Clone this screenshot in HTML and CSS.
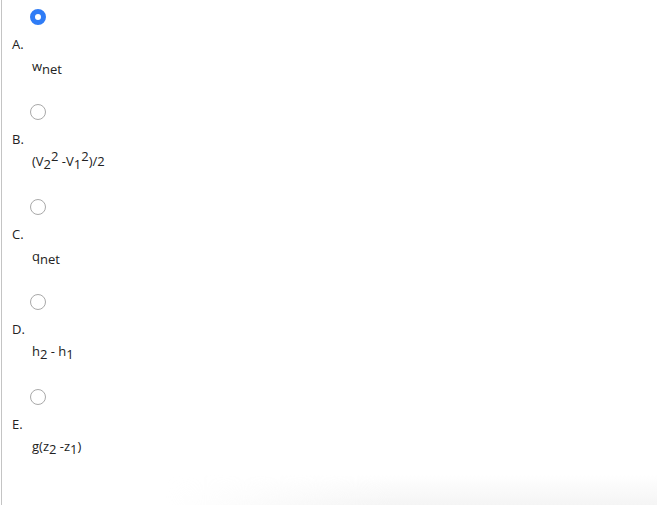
FILE: index.html
```html
<!DOCTYPE html>
<html>
<head>
<meta charset="utf-8">
<link rel="stylesheet" href="styles.css">
</head>
<body>
<div class="page">
  <div class="option">
    <div class="radio-row"><span class="radio checked"></span></div>
    <div class="letter">A.</div>
    <div class="answer">w<sub>net</sub></div>
  </div>
  <div class="option">
    <div class="radio-row"><span class="radio"></span></div>
    <div class="letter">B.</div>
    <div class="answer">(V<sub>2</sub><sup>2</sup> -V<sub>1</sub><sup>2</sup>)/2</div>
  </div>
  <div class="option">
    <div class="radio-row"><span class="radio"></span></div>
    <div class="letter">C.</div>
    <div class="answer">q<sub>net</sub></div>
  </div>
  <div class="option">
    <div class="radio-row"><span class="radio"></span></div>
    <div class="letter">D.</div>
    <div class="answer">h<sub>2</sub> - h<sub>1</sub></div>
  </div>
  <div class="option">
    <div class="radio-row"><span class="radio"></span></div>
    <div class="letter">E.</div>
    <div class="answer">g(z<sub>2</sub> -z<sub>1</sub>)</div>
  </div>
  <div class="fade"></div>
</div>
</body>
</html>
```
FILE: styles.css
```css
html, body {
  margin: 0;
  padding: 0;
  background: #fff;
}
body {
  font-family: "Open Sans", "Liberation Sans", sans-serif;
  font-size: 13px;
  color: #222;
}
.page {
  position: relative;
  margin-left: 1px;
  border-left: 1px solid #c4c4c4;
  height: 505px;
  box-sizing: border-box;
  padding-top: 9px;
  overflow: hidden;
}
.option {
  height: 95px;
}
.radio-row {
  padding-left: 28px;
  height: 16px;
}
.radio {
  display: block;
  width: 16px;
  height: 16px;
  box-sizing: border-box;
  border-radius: 50%;
  border: 1px solid #a9a9a9;
  background: #fff;
}
.radio.checked {
  border: 5px solid #2f7cf6;
  background: #fff;
}
.letter {
  padding-left: 10px;
  margin-top: 10px;
  line-height: 18px;
}
.answer {
  padding-left: 30px;
  margin-top: 4px;
  line-height: 18px;
}
sub, sup {
  font-size: inherit;
  line-height: 0;
  position: relative;
}
sub {
  vertical-align: baseline;
  top: 3px;
}
sup {
  vertical-align: baseline;
  top: -5px;
}
.fade {
  position: absolute;
  left: 0;
  right: 0;
  bottom: 0;
  height: 30px;
  background: linear-gradient(to bottom, rgba(240,240,240,0), rgba(240,240,240,0.7));
  -webkit-mask-image: linear-gradient(to right, transparent 25%, #000 60%);
  mask-image: linear-gradient(to right, transparent 25%, #000 60%);
}
```
